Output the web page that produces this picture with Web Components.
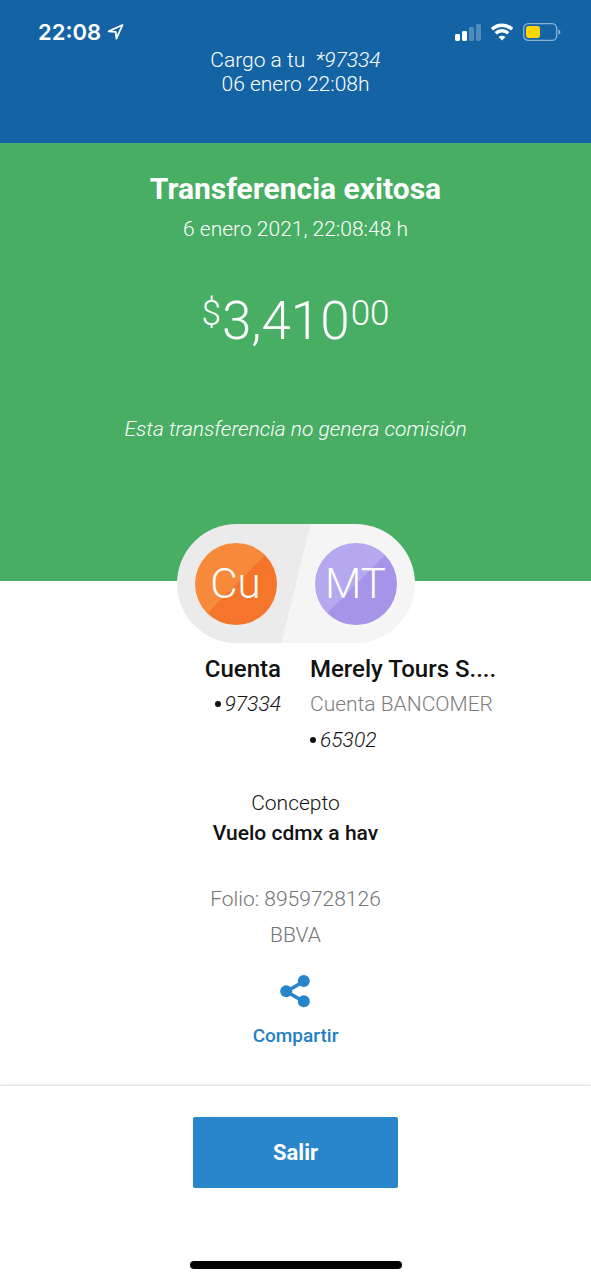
<!DOCTYPE html>
<html lang="es">
<head>
<meta charset="utf-8">
<meta name="viewport" content="width=device-width, initial-scale=1">
<title>Transferencia exitosa</title>
<style>
  body { margin: 0; background: #fff; color: #121212; font-family: Roboto, "Open Sans", sans-serif; font-size: 21px; font-weight: 300; }
</style>
</head>
<body>
<transfer-receipt></transfer-receipt>
<script>
const define = (name, html) => customElements.define(name, class extends HTMLElement {
  constructor() {
    super();
    this.attachShadow({ mode: "open" }).innerHTML = html;
  }
});

define("status-bar", `
  <style>
    :host { display: flex; justify-content: space-between; align-items: center; height: 32px; padding: 16px 30px 0 38px; }
    .side { display: flex; align-items: center; }
    .time { font: 600 22px/32px Inter, sans-serif; margin-right: 6px; }
    svg { display: block; }
    .icons { gap: 10px; }
  </style>
  <div class="side">
    <span class="time">22:08</span>
    <svg width="18" height="18" viewBox="0 0 18 18" fill="none" stroke="#fff" stroke-width="1.8" stroke-linejoin="round"><path d="M15.5 2 9.4 15.6 8.7 8.9 1.6 8.3Z"/></svg>
  </div>
  <div class="side icons">
    <svg width="27" height="18" viewBox="0 0 27 18" fill="#fff"><rect x="1" y="11" width="5" height="7" rx="1.4"/><rect x="8" y="8" width="5" height="10" rx="1.4"/><g opacity=".25"><rect x="15" y="4" width="5" height="14" rx="1.4"/><rect x="22" y="1" width="5" height="17" rx="1.4"/></g></svg>
    <svg width="22" height="18" viewBox="0 0 22 18" fill="none" stroke="#fff" stroke-width="3.4"><path d="M1 6.2a14.5 14.5 0 0 1 20 0"/><path d="M4.7 10.3a9.2 9.2 0 0 1 12.6 0"/><path d="M11 17.4 7.6 14a4.9 4.9 0 0 1 6.8 0Z" fill="#fff" stroke="none"/></svg>
    <svg width="38" height="18" viewBox="0 0 38 18"><rect x=".7" y=".7" width="33" height="16.6" rx="4.6" fill="none" stroke="#fff" stroke-opacity=".5" stroke-width="1.3"/><rect x="3" y="3" width="14" height="12" rx="2.4" fill="#ffd60a"/><path d="M35.4 6.2c2.6 1 2.6 4.6 0 5.6Z" fill="#fff" opacity=".5"/></svg>
  </div>
`);

define("charge-header", `
  <style>
    :host { display: block; background: #1464a5; color: #fff; padding-bottom: 47px; text-align: center; }
    p { margin: 0; line-height: 24px; white-space: pre; }
  </style>
  <status-bar></status-bar>
  <p>Cargo a tu  <i>*97334</i></p>
  <p>06 enero 22:08h</p>
`);

define("transfer-summary", `
  <style>
    :host { display: block; background: #48ae64; color: #fff; text-align: center; padding: 30px 16px 140px; }
    h1, p { margin: 0; line-height: 24px; }
    h1 { font-size: 30px; font-weight: 700; line-height: 32px; margin-bottom: 12px; }
    .amount { display: flex; justify-content: center; gap: 1px; margin: 52px 0 68px; font-size: 53px; line-height: 56px; }
    .amount span { font-size: 35px; line-height: 42px; }
  </style>
  <h1>Transferencia exitosa</h1>
  <p>6 enero 2021, 22:08:48 h</p>
  <p class="amount"><span>$</span>3,410<span>00</span></p>
  <p><i>Esta transferencia no genera comisión</i></p>
`);

define("account-avatar", `
  <style>
    :host { display: block; width: 82px; border-radius: 50%; color: #fff; text-align: center; font-size: 42px; line-height: 82px;
      background: linear-gradient(135deg, var(--light) 50%, var(--dark) 50%); }
  </style>
  <slot></slot>
`);

define("avatar-pair", `
  <style>
    :host { display: flex; justify-content: center; gap: 38px; box-sizing: border-box; width: fit-content; margin: -57px auto 0; padding: 19px 18px 18px;
      position: relative; border-radius: 60px; background: linear-gradient(104deg, #ebebeb 50%, #f5f5f5 50%); }
    .from { --light: #f7893b; --dark: #f5762a; }
    .to { --light: #b5a8ef; --dark: #a594e8; }
  </style>
  <account-avatar class="from">Cu</account-avatar>
  <account-avatar class="to">MT</account-avatar>
`);

define("account-card", `
  <style>
    :host { display: block; min-width: 0; line-height: 36px; }
    h2 { margin: 0 0 1px; font-size: 24px; font-weight: 500; line-height: 32px; }
    .number { display: flex; align-items: center; justify-content: var(--side, flex-start); gap: 4px; font-style: italic; }
    .number::before { content: ""; width: 6px; height: 6px; border-radius: 50%; background: currentColor; }
    ::slotted(p) { margin: 0; color: #7d7d7d; }
  </style>
  <h2><slot name="name"></slot></h2>
  <slot></slot>
  <div class="number"><slot name="number"></slot></div>
`);

define("transfer-details", `
  <style>
    :host { display: block; text-align: center; }
    .accounts { display: grid; grid-template-columns: 1fr 1fr; gap: 29px; margin-top: 10px; text-align: left; }
    .from { text-align: right; --side: flex-end; }
    dl, dt, dd { margin: 0; }
    dl { margin-top: 30px; line-height: 30px; }
    dd { font-weight: 500; }
    .folio { margin-top: 33px; color: #757575; line-height: 36px; }
    .folio p { margin: 0; }
  </style>
  <avatar-pair></avatar-pair>
  <div class="accounts">
    <account-card class="from"><span slot="name">Cuenta</span><span slot="number">97334</span></account-card>
    <account-card><span slot="name">Merely Tours S....</span><p>Cuenta BANCOMER</p><span slot="number">65302</span></account-card>
  </div>
  <dl><dt>Concepto</dt><dd>Vuelo cdmx a hav</dd></dl>
  <div class="folio"><p>Folio: 8959728126</p><p>BBVA</p></div>
`);

define("share-button", `
  <style>
    :host { display: flex; justify-content: center; padding: 21px 0 37px; }
    button { display: flex; flex-direction: column; align-items: center; gap: 16px; border: 0; padding: 0; background: none; color: #237fc5;
      font: inherit; font-size: 19px; font-weight: 500; line-height: 24px; cursor: pointer; }
  </style>
  <button type="button">
    <svg width="30" height="34" viewBox="0 0 30 34" fill="#2884ca"><path d="M23.5 7.5 6.5 17.5 23.5 27.5" fill="none" stroke="#2884ca" stroke-width="3.6"/><circle cx="6.2" cy="17.3" r="6"/><circle cx="23.8" cy="7" r="6"/><circle cx="23.8" cy="27.2" r="6"/></svg>
    <slot></slot>
  </button>
`);

define("exit-footer", `
  <style>
    :host { display: flex; flex-direction: column; align-items: center; flex: 1; border-top: 1px solid #e6e6e6; box-shadow: 0 -1px 2px #ececec; padding: 31px 0 11px; }
    button { border: 0; border-radius: 2px; padding: 0 80px; background: #2a86ca; color: #fff; font: inherit; font-size: 22px; font-weight: 700; line-height: 71px; cursor: pointer; }
    .home { width: 212px; height: 8px; margin-top: auto; border-radius: 4px; background: #000; }
  </style>
  <button type="button"><slot></slot></button>
  <div class="home"></div>
`);

define("transfer-receipt", `
  <style>
    :host { display: flex; flex-direction: column; min-height: 100vh; }
  </style>
  <charge-header></charge-header>
  <transfer-summary></transfer-summary>
  <transfer-details></transfer-details>
  <share-button>Compartir</share-button>
  <exit-footer>Salir</exit-footer>
`);
</script>
</body>
</html>
